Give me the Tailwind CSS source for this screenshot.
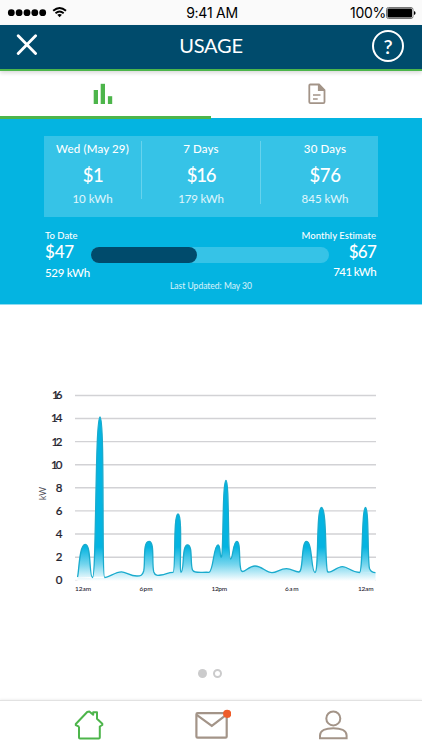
<!DOCTYPE html>
<html lang="en">
<head>
    <meta charset="UTF-8">
    <meta name="viewport" content="width=device-width, initial-scale=1.0">
    <title>Usage</title>
    <script src="https://cdn.jsdelivr.net/npm/@tailwindcss/browser@4"></script>
</head>
<body class="bg-white overflow-hidden">
    <div class="w-[422px] h-[750px] flex flex-col font-[Lato,sans-serif] text-white whitespace-nowrap">

        <!-- Status bar -->
        <div class="h-[25px] shrink-0 bg-[#fafafa] text-black grid grid-cols-3 items-center font-[Inter,sans-serif] text-[14px]">
            <svg class="w-[70px] h-[25px]" viewBox="0 0 70 25" fill="currentColor">
                <circle cx="11.3" cy="12.7" r="3.4"/>
                <circle cx="19.1" cy="12.7" r="3.4"/>
                <circle cx="27" cy="12.7" r="3.4"/>
                <circle cx="34.8" cy="12.7" r="3.4"/>
                <circle cx="42.7" cy="12.7" r="3.4"/>
                <path d="M53.2 10.8Q59.6 5 66 10.8" fill="none" stroke="currentColor" stroke-width="1.9"/>
                <path d="M55.5 13.2Q59.6 9.7 63.7 13.2" fill="none" stroke="currentColor" stroke-width="1.8"/>
                <path d="M57.3 14.8Q59.6 13 61.9 14.8L59.6 17.3Z"/>
            </svg>
            <span class="text-center leading-[25px] tracking-[-0.25px] pl-[2px]">9:41 AM</span>
            <div class="flex items-center justify-end pr-[6px]">
                <span class="leading-[25px] tracking-[-0.3px]">100%</span>
                <svg class="w-[30px] h-[14px]" viewBox="0 0 30 14">
                    <rect x="0.5" y="1.5" width="26.5" height="11" rx="2" fill="#fff" stroke="#777"/>
                    <rect x="1.5" y="2.5" width="24.5" height="9" rx="1" fill="#000"/>
                    <path d="M28 5v4q1.6-.6 1.6-2T28 5" fill="#000"/>
                </svg>
            </div>
        </div>

        <!-- Header -->
        <header class="relative z-10 h-[46px] shrink-0 bg-[#004b6c] border-b-2 border-b-[#4db54b] shadow-[0_2px_4px_rgba(0,0,0,0.15)] flex items-center justify-between pl-[16px] pr-[18px]">
            <svg class="w-[22px] h-[22px] mt-[-4px]" viewBox="0 0 22 22" stroke="#fff" stroke-width="2.8" stroke-linecap="round">
                <path d="M2.2 1.7L19.6 19.4M19.6 1.7L2.2 19.4"/>
            </svg>
            <h1 class="text-[20px] leading-6 tracking-[-0.2px] pl-[12px] pb-[5px]">USAGE</h1>
            <div class="w-[32px] h-[32px] mt-[-2px] rounded-full border-2 border-white flex items-center justify-center">
                <span class="text-[20px] leading-5 font-semibold">?</span>
            </div>
        </header>

        <!-- Tabs -->
        <nav class="h-[47px] shrink-0 bg-white grid grid-cols-2">
            <div class="relative z-10 h-[48px] border-b-3 border-[#4db54b] flex justify-center">
                <svg class="w-[20px] h-[21px] mt-[12px] ml-[-6px]" viewBox="0 0 20 21" fill="#4db54b">
                    <rect x="0.7" y="7" width="4.3" height="14"/>
                    <rect x="7.7" y="0.8" width="4.3" height="20.2"/>
                    <rect x="14.9" y="13.2" width="4.3" height="7.8"/>
                </svg>
            </div>
            <div class="flex justify-center">
                <svg class="w-[18px] h-[22px] mt-[12px]" viewBox="0 0 18 22" fill="none" stroke="#a39488" stroke-width="1.8">
                    <path d="M2.3 1.5H11L16.5 7V19Q16.5 20.2 15.3 20.2H2.5Q1.3 20.2 1.3 19V2.5Q1.3 1.5 2.3 1.5Z"/>
                    <path d="M10.8 1.5V7.2H16.5" fill="#a39488"/>
                    <path d="M5 12H12.5M5 15.9H9.7" stroke-width="1.5"/>
                </svg>
            </div>
        </nav>

        <!-- Usage summary -->
        <section class="h-[187px] shrink-0 bg-[#04b4e1] border-b border-[#8edcf1] pt-[18px] pl-[44px] pr-[44px]">
            <div class="h-[81px] bg-[#36c3e7] grid grid-cols-[98px_119px_117px] text-center">
                <div class="h-[58px] mt-[5px] border-r border-[#67d3ed]">
                    <p class="text-[11.5px] leading-4 tracking-[0.15px] font-medium">Wed (May 29)</p>
                    <p class="text-[18.5px] leading-6 mt-[6px] tracking-[-0.5px] font-medium pl-px">$1</p>
                    <p class="text-[11.5px] leading-4 mt-[4px] text-white/85">10 kWh</p>
                </div>
                <div class="h-[63px] mt-[5px] border-r border-[#67d3ed]">
                    <p class="text-[11.5px] leading-4 tracking-[0.15px] font-medium">7 Days</p>
                    <p class="text-[18.5px] leading-6 mt-[6px] tracking-[-1.2px] font-medium">$16</p>
                    <p class="text-[11.5px] leading-4 mt-[4px] tracking-[-0.2px] text-white/85">179 kWh</p>
                </div>
                <div class="h-[63px] mt-[5px] pl-[11px]">
                    <p class="text-[11.5px] leading-4 tracking-[0.15px] font-medium">30 Days</p>
                    <p class="text-[18.5px] leading-6 mt-[6px] tracking-[-0.4px] font-medium">$76</p>
                    <p class="text-[11.5px] leading-4 mt-[4px] text-white/85">845 kWh</p>
                </div>
            </div>

            <div class="h-[62px] mt-[13px] flex justify-between pr-[2px]">
                <div class="w-[47px] pl-px">
                    <p class="text-[9.5px] leading-3 font-medium">To Date</p>
                    <p class="text-[17px] leading-5 font-medium tracking-[-0.2px]">$47</p>
                    <p class="text-[11.5px] leading-4 mt-[3px] font-medium tracking-[-0.3px]">529 kWh</p>
                </div>
                <div class="w-[238px] shrink-0">
                    <div class="h-[16px] mt-[17px] rounded-full bg-[#36c3e7]">
                        <div class="h-full rounded-full bg-[#004b6c]" style="width: 44.5%"></div>
                    </div>
                    <p class="mt-[17px] text-[8.5px] leading-3 text-center text-white/85 pl-[2px]">Last Updated: May 30</p>
                </div>
                <div class="w-[47px] flex flex-col items-end">
                    <p class="text-[9.5px] leading-3 font-medium tracking-[0.05px]">Monthly Estimate</p>
                    <p class="text-[17px] leading-5 font-medium tracking-[-0.8px]">$67</p>
                    <p class="text-[11.5px] leading-4 mt-[2px] font-medium tracking-[-0.6px]">741 kWh</p>
                </div>
            </div>
        </section>

        <!-- Usage chart -->
        <main class="h-[395px] shrink-0 bg-white flex flex-col items-center pt-[75px]">
            <svg class="w-[422px] h-[220px]" viewBox="0 380 422 220">
                <defs>
                    <linearGradient id="usage" gradientUnits="userSpaceOnUse" x1="0" y1="547" x2="0" y2="581">
                        <stop offset="0" stop-color="#04b4e1"/>
                        <stop offset="0.5" stop-color="#72d4ed"/>
                        <stop offset="1" stop-color="#ffffff"/>
                    </linearGradient>
                </defs>
                <path d="M75 395.5H376M75 418.5H376M75 441.6H376M75 464.7H376M75 487.8H376M75 510.9H376M75 534H376M75 557.2H376" stroke="#d2d2d5" stroke-width="1.4"/>
                <path d="M75 580.3H376" stroke="#e8e8eb"/>
                <path fill="url(#usage)" d="M77.5 577.3L92.5 578L104.7 578L121.5 572L137 576.3L161 575.3L173 573L209 573L241 572L255 566.8L272 573L286.5 569.2L299 572.3L315 573L328 573L342.5 567L359.5 573L375.5 573V581H77.5Z"/>
                <path stroke="#1aabcd" stroke-width="1.3" fill="url(#usage)" d="M77.5 577C79 573 79 544.5 85.3 544.5C91.5 544.5 89 577.5 92.5 577.5C96.5 577.5 95 417 100 417C105 417 101.5 577.5 104.7 577.5C109 577.5 115 571.8 121.5 571.8C126 571.8 130 576 137 576C140.5 576 142.5 575.5 143.7 571C145.5 563 142.5 541.3 149 541.3C155 541.3 151.5 563 153.8 572C155 576 158 575.5 161 575C166 574.5 168 572.3 173 572.3C176 572.3 173 514 178 514C183 514 179 572.3 181 572.3C184.5 572.3 181.5 544.8 187.5 544.8C193 544.8 190 564 192.5 570C194 573.5 200 572 209 572.3C213.5 571.5 213.5 544.8 218 544.8C221 545 219.5 558 221.5 557C223.5 554 222.3 480.5 226 480.5C229.5 480.5 227.5 559 230.5 559C233 559 233 541.3 236.8 541.3C241 541.3 238.5 562 241 570C243 575 248 566 255 566C262 566 266 572.7 272 572.7C277 572.7 280 568.7 286.5 568.7C292 568.7 294 571.8 299 572C303.5 572 301 541.3 306.5 541.3C312.5 541.3 311 572.5 315 572.5C319 572.5 316 507.5 321.5 507.5C327 507.5 325 567 327.5 571.5C330 575 336 566.6 342.5 566.6C348 566.6 351 572.3 359.5 572.5C363 572.5 361.5 507.5 365.5 507.5C369 507.5 367.5 562 369.5 568.5C370.5 571 372.5 572.7 375.5 572.7"/>
                <g fill="#24232f" font-family="Lato, sans-serif" font-size="11.5" font-weight="500" text-anchor="end" stroke="#24232f" stroke-width="0.2">
                    <text x="62.5" y="399.3" textLength="10.5">16</text>
                    <text x="62.5" y="422.4" textLength="11.5">14</text>
                    <text x="62.5" y="445.5" textLength="11">12</text>
                    <text x="62.5" y="468.5" textLength="11.5">10</text>
                    <text x="62.5" y="491.6">8</text>
                    <text x="62.5" y="514.7">6</text>
                    <text x="62.5" y="537.8">4</text>
                    <text x="62.5" y="560.9">2</text>
                    <text x="62.5" y="584">0</text>
                </g>
                <text transform="translate(45.8 500) rotate(-90)" fill="#4d4c57" font-family="Lato, sans-serif" font-size="8.5">kW</text>
                <g fill="#24232f" font-family="Lato, sans-serif" font-size="6.5" font-weight="500">
                    <text x="75" y="591" textLength="16">12am</text>
                    <text x="139.5" y="591" textLength="13">6pm</text>
                    <text x="211.5" y="591" textLength="15.5">12pm</text>
                    <text x="285" y="591" textLength="13.5">6am</text>
                    <text x="358" y="591" textLength="15.5">12am</text>
                </g>
            </svg>
            <div class="flex gap-[6px] mt-[69px] pr-[2px]">
                <span class="size-[9px] rounded-full bg-[#cbcbcc]"></span>
                <span class="size-[9px] rounded-full border-2 border-[#cbcbcc]"></span>
            </div>
        </main>

        <!-- Bottom navigation -->
        <footer class="h-[50px] shrink-0 border-t border-[#e2e2e2] shadow-[0_-1px_2px_rgba(0,0,0,0.06)] bg-white flex items-start justify-between pl-[74px] pr-[74px] pt-[8px]">
            <svg class="w-[30px] h-[32px]" viewBox="0 0 30 32" fill="none" stroke="#4db54b" stroke-width="2" stroke-linejoin="round">
                <path d="M5 17.5V28.5Q5 29.5 6 29.5H24.8Q25.8 29.5 25.8 28.5V17.5L28.3 16V14.8L23 9.8V3.2H19.2V5.8L15.3 2.5L13.2 3L1.8 15V16.2L5 17.7"/>
            </svg>
            <svg class="w-[38px] h-[32px] ml-[1px]" viewBox="0 0 38 32" fill="none" stroke="#a39488" stroke-width="2.2">
                <rect x="3.4" y="4.2" width="30.3" height="24.5" rx="1.2"/>
                <path d="M3.7 5.8L18.8 16.8L33.2 5.8"/>
                <circle cx="34.2" cy="4.8" r="4.1" fill="#ef5c29" stroke="none"/>
            </svg>
            <svg class="w-[30px] h-[32px]" viewBox="0 0 30 32" fill="none" stroke="#a39488" stroke-width="2">
                <circle cx="15.3" cy="9.4" r="7"/>
                <path d="M2 29.2V26.5C2 21.5 8 19.2 15.3 19.2C22.5 19.2 28.6 21.5 28.6 26.5V29.2Z"/>
            </svg>
        </footer>
    </div>
</body>
</html>
